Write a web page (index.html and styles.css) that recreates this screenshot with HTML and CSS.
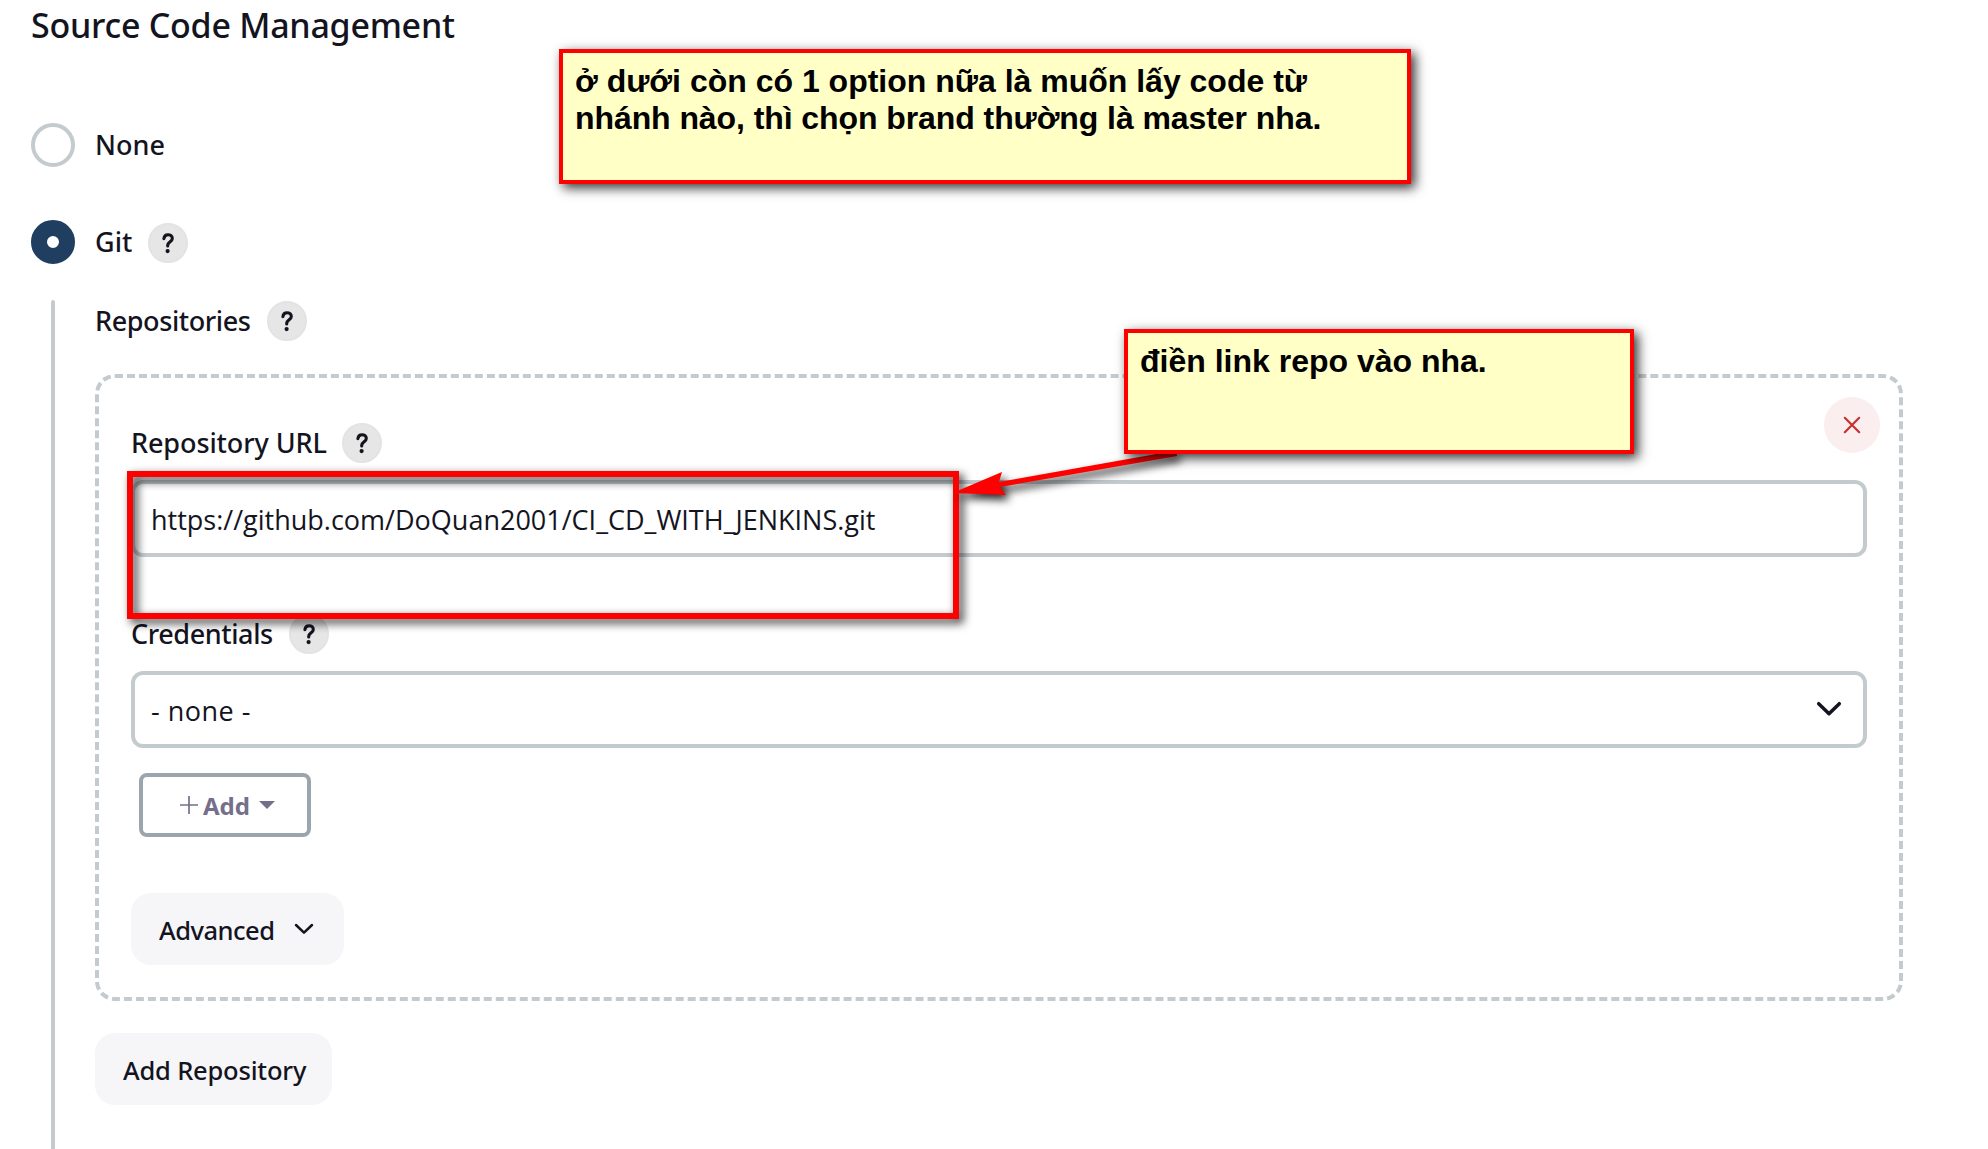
FILE: index.html
```html
<!DOCTYPE html>
<html lang="vi">
<head>
<meta charset="utf-8">
<title>Source Code Management</title>
<link rel="stylesheet" href="styles.css">
</head>
<body>
<svg class="defs" width="0" height="0" aria-hidden="true">
  <symbol id="help" viewBox="0 0 40 40">
    <path d="M15.9 15.6C16.2 12.9 18 11.7 20 11.7C22.5 11.7 24.3 13.2 24.3 15.5C24.3 18.7 19.9 18.8 19.7 22.3V23" fill="none" stroke="currentColor" stroke-width="3.1" stroke-linecap="round" stroke-linejoin="round"/>
    <circle cx="19.6" cy="28.1" r="2.1" fill="currentColor"/>
  </symbol>
</svg>
<main class="scm">
  <h1 class="scm-title">Source Code Management</h1>
  <div class="option option-none"><span class="radio"></span><span class="label">None</span></div>
  <div class="option option-git"><span class="radio radio-on"></span><span class="label">Git</span><span class="help"><svg><use href="#help"/></svg></span></div>
  <section class="nested">
    <div class="field-head head-repos"><span class="label label-tight">Repositories</span><span class="help"><svg><use href="#help"/></svg></span></div>
    <div class="repo">
      <button class="remove" aria-label="Remove"><svg width="56" height="56" viewBox="0 0 56 56"><path d="M20.8 20.8L35.2 35.2M35.2 20.8L20.8 35.2"/></svg></button>
      <div class="field-head head-url"><span class="label">Repository URL</span><span class="help"><svg><use href="#help"/></svg></span></div>
      <div class="input"><span class="url">https://github.com/DoQuan2001/CI_CD_WITH_JENKINS.git</span></div>
      <div class="field-head head-cred"><span class="label label-tight">Credentials</span><span class="help"><svg><use href="#help"/></svg></span></div>
      <div class="input select"><span class="value">- none -</span><svg width="28" height="18" viewBox="0 0 28 18"><path d="M3.7 3.7L14 13.7L24.3 3.7"/></svg></div>
      <button class="add"><svg class="plus" width="18" height="18" viewBox="0 0 18 18"><path d="M9 0V18M0 9H18"/></svg><span>Add</span><svg class="caret" width="16" height="8" viewBox="0 0 16 8"><path d="M0 0H16L8 8Z"/></svg></button>
      <button class="btn btn-advanced"><span>Advanced</span><svg width="20" height="12" viewBox="0 0 20 12"><path d="M2 2L10 9.7L18 2"/></svg></button>
    </div>
    <button class="btn btn-repo">Add Repository</button>
  </section>
</main>

<div class="mark"></div>
<svg class="arrow" width="260" height="80" viewBox="0 0 260 80"><path d="M12.5 53L62 32L59 42L236 10.5L237 16L60 47L66 55Z"/></svg>
<div class="note note-branch">ở dưới còn có 1 option nữa là muốn lấy code từ<br><span class="note-tight">nhánh nào, thì chọn brand thường là master nha.</span></div>
<div class="note note-link">điền link repo vào nha.</div>
</body>
</html>
```
FILE: styles.css
```css
* { box-sizing: border-box; }
body {
  margin: 0;
  width: 1988px;
  height: 1149px;
  overflow: hidden;
  position: relative;
  background: #fff;
  color: #14141f;
  font-family: "Noto Sans", "Open Sans", sans-serif;
}
.defs { position: absolute; }
button { font: inherit; color: inherit; margin: 0; padding: 0; border: 0; }
svg { display: block; flex: none; }

.scm { display: flex; flex-direction: column; height: 1149px; padding: 2px 85px 0 31px; }
.scm-title { margin: 0; font-size: 34px; font-weight: 500; line-height: 46px; letter-spacing: -.26px; }

.option { display: flex; align-items: center; height: 44px; }
.option-none { margin-top: 75px; }
.option-git { margin-top: 53px; }
.radio { width: 44px; height: 44px; margin-right: 20px; border: 4px solid #c4cbcf; border-radius: 50%; }
.radio-on { border: 16px solid #1f3e60; }
.label { font-size: 27px; font-weight: 500; line-height: 40px; white-space: nowrap; }
.label-tight { letter-spacing: -.4px; }
.help { width: 40px; height: 40px; border: 2px solid #e3e3e4; border-radius: 50%; background: #e6e6e7; }
.help svg { width: 40px; height: 40px; margin: -2px; }
.option .help { margin: 2px 0 0 16px; }

.nested { position: relative; flex: 1; margin-top: 36px; padding-left: 64px; display: flex; flex-direction: column; align-items: flex-start; }
.nested::before { content: ""; position: absolute; left: 20px; top: 0; bottom: 0; width: 4px; border-radius: 2px 2px 0 0; background: #c4cbcf; }
.field-head { display: flex; align-items: center; height: 40px; }
.head-repos { margin-top: 1px; }
.head-repos .help { margin-left: 16px; }
.head-url .label { letter-spacing: -.1px; }
.head-url .help { margin-left: 15px; }
.head-cred .help { margin-left: 16px; }

.repo {
  position: relative;
  align-self: stretch;
  height: 627px;
  margin-top: 33px;
  padding: 45px 32px 0;
  border: 4px dashed #c4cbcf;
  border-radius: 20px;
}
.remove { position: absolute; top: 19px; right: 19px; width: 56px; height: 56px; border-radius: 50%; background: #fbeeef; }
.remove path { stroke: #cb3030; stroke-width: 2.2; stroke-linecap: round; }
.input {
  display: flex;
  align-items: center;
  justify-content: space-between;
  height: 77px;
  margin-top: 17px;
  padding: 2px 20px 0 16px;
  border: 4px solid #c4cbcf;
  border-radius: 12px;
  font: 27px "Open Sans", "Noto Sans", sans-serif;
  white-space: nowrap;
}
.value { letter-spacing: .5px; }
.head-cred { margin-top: 57px; }
.select svg { margin-top: -3px; }
.select path { fill: none; stroke: #14141f; stroke-width: 3.5; stroke-linecap: round; stroke-linejoin: round; }

.add {
  display: flex;
  align-items: center;
  width: 172px;
  height: 64px;
  margin: 25px 0 0 8px;
  padding: 0 0 0 37px;
  border: 4px solid #9ba5ad;
  border-radius: 8px;
  background: transparent;
  color: #756f8b;
  font-size: 24px;
  font-weight: 700;
  line-height: 34px;
}
.add span { margin: 1px 9px 0 5px; }
.add path { fill: none; stroke: #756f8b; stroke-width: 1.7; }
.add .caret path { fill: #756f8b; stroke: none; }

.btn { display: flex; align-items: center; height: 72px; padding: 2px 28px 0; border-radius: 20px; background: #f6f6f9; font-size: 25.5px; font-weight: 500; white-space: nowrap; }
.btn-advanced { width: 213px; margin-top: 56px; letter-spacing: -.5px; }
.btn-advanced svg { margin: -2px 0 0 19px; }
.btn-advanced path { fill: none; stroke: #14141f; stroke-width: 2.5; stroke-linecap: round; stroke-linejoin: round; }
.btn-repo { width: 237px; margin-top: 32px; padding-left: 28px; letter-spacing: -.2px; }

/* Annotations laid over the form */
.mark {
  position: absolute;
  left: 127px;
  top: 471px;
  width: 832px;
  height: 148px;
  border: 6px solid #f00;
  filter: drop-shadow(4px 4px 5px rgba(0, 0, 0, .85));
}
.arrow { position: absolute; left: 940px; top: 440px; overflow: visible; filter: drop-shadow(4px 5px 4.5px rgba(0, 0, 0, .85)); }
.arrow path { fill: #f00; }
.note {
  position: absolute;
  border: 4px solid #f00;
  background: #ffffc6;
  color: #000;
  box-shadow: 4px 4px 11px rgba(0, 0, 0, .8);
  font: 700 32px/37px "Liberation Sans", Arial, sans-serif;
  white-space: nowrap;
}
.note-branch { left: 559px; top: 49px; width: 852px; height: 135px; padding: 10px 12px; }
.note-tight { letter-spacing: -.08px; }
.note-link { left: 1124px; top: 329px; width: 510px; height: 125px; padding: 10px 12px; }
```
